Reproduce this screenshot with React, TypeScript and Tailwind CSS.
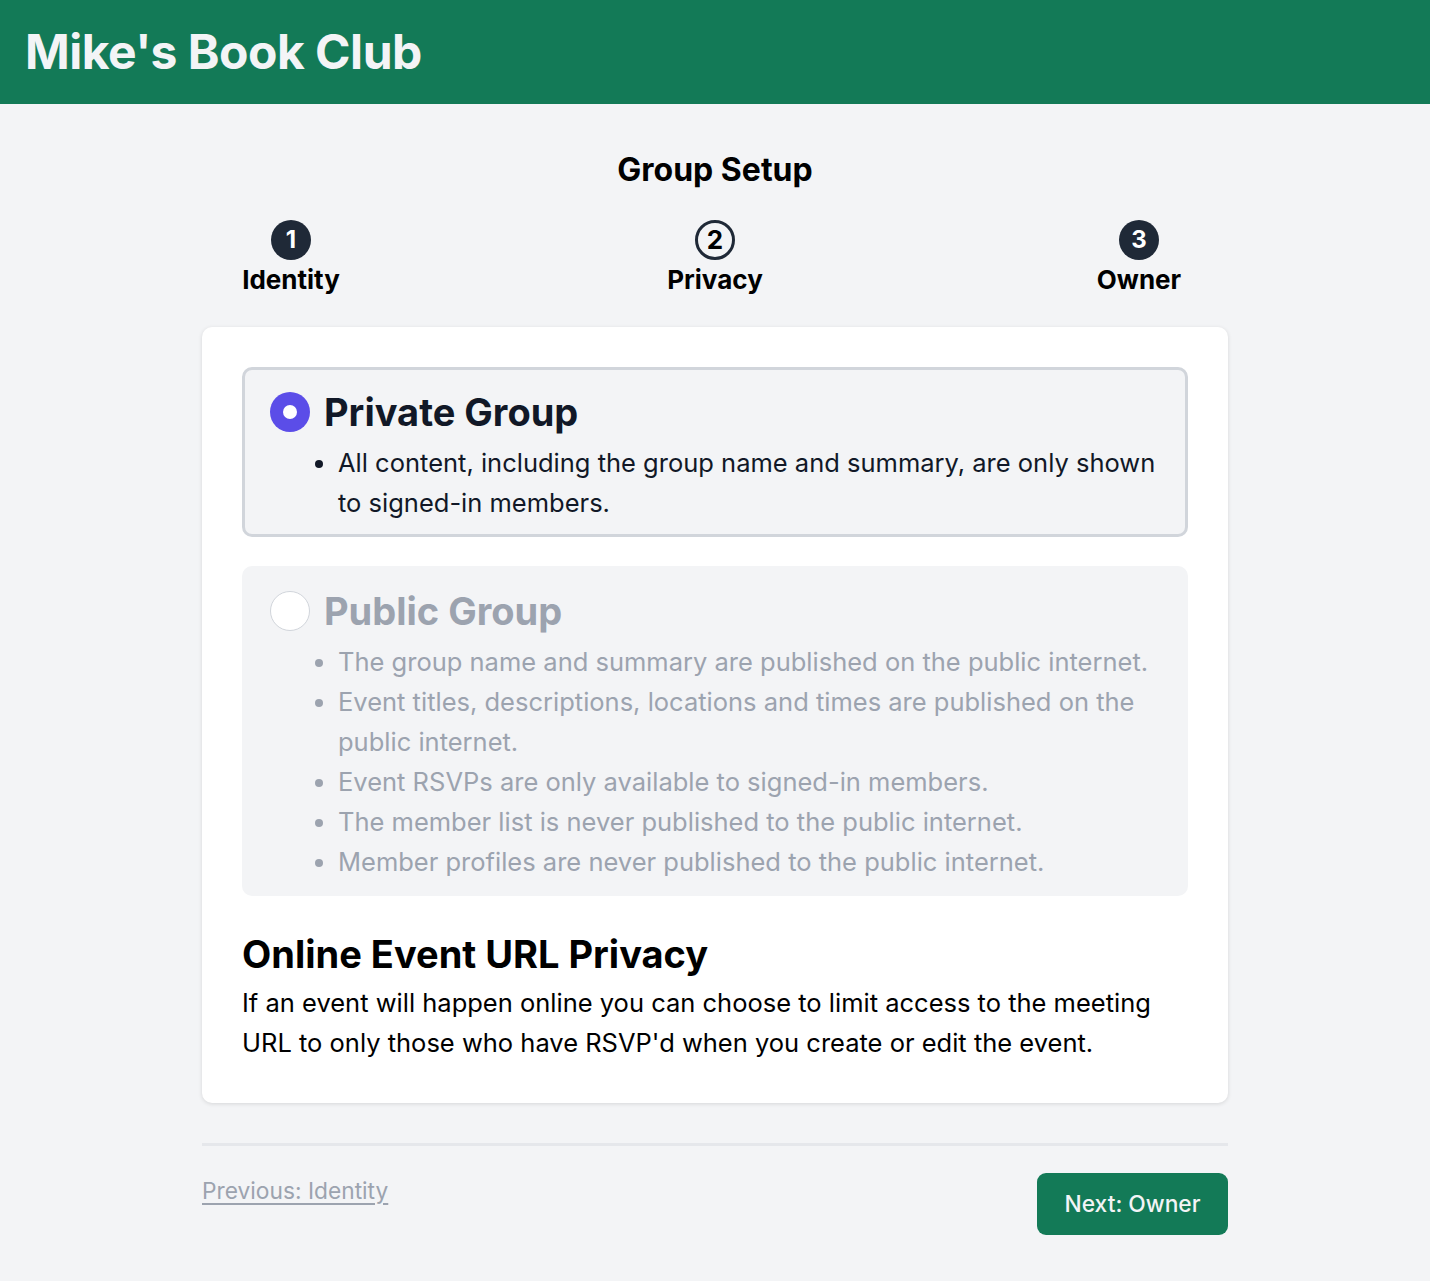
const publicPoints = [
  'The group name and summary are published on the public internet.',
  'Event titles, descriptions, locations and times are published on the public internet.',
  'Event RSVPs are only available to signed-in members.',
  'The member list is never published to the public internet.',
  'Member profiles are never published to the public internet.',
];

const steps = [
  { n: 1, label: 'Identity', current: false },
  { n: 2, label: 'Privacy', current: true },
  { n: 3, label: 'Owner', current: false },
];

function StepBadge({ n, current }: { n: number; current: boolean }) {
  if (current) {
    return (
      <div className="flex h-[40px] w-[40px] items-center justify-center rounded-full border-[3px] border-[#1f2937] text-[26px] font-bold leading-none text-black">
        {n}
      </div>
    );
  }
  return (
    <div className="flex h-[40px] w-[40px] items-center justify-center rounded-full bg-[#1f2937] text-[24px] font-bold leading-none text-white">
      {n}
    </div>
  );
}

export default function App() {
  return (
    <div className="min-h-[1281px] bg-[#f3f4f6] font-['Inter',_'Noto_Sans',_sans-serif]">
      <header className="flex h-[104px] items-center bg-[#137a57] px-[25px]">
        <h1 className="text-[48px] font-bold tracking-[-0.5px] text-[#f3f4f6]">Mike's Book Club</h1>
      </header>

      <main className="pt-[46px]">
        <h2 className="text-center text-[32px] font-bold leading-[40px] text-black">Group Setup</h2>

        <div className="mx-auto mt-[30px] grid w-[1272px] grid-cols-3">
          {steps.map((s) => (
            <div key={s.n} className="flex flex-col items-center">
              <StepBadge n={s.n} current={s.current} />
              <span className="mt-[2px] text-[26px] font-bold leading-[36px] text-black">{s.label}</span>
            </div>
          ))}
        </div>

        <div className="mx-auto mt-[29px] w-[1026px] rounded-[10px] bg-white p-[40px] shadow-[0_1px_4px_rgba(0,0,0,0.12)]">
          <div className="rounded-[10px] border-[3px] border-[#d1d5db] bg-[#f3f4f6] px-[25px] pb-[11px] pt-[18px]">
            <div className="flex items-center gap-[14px]">
              <span className="flex h-[40px] w-[40px] items-center justify-center rounded-full bg-[#5b4de8]">
                <span className="h-[14px] w-[14px] rounded-full bg-white" />
              </span>
              <span className="text-[38px] font-bold leading-[48px] text-[#111827]">Private Group</span>
            </div>
            <ul className="mt-[7px] list-disc pl-[68px] text-[25.5px] leading-[40px] text-[#111827] marker:text-[#111827]">
              <li>All content, including the group name and summary, are only shown to signed-in members.</li>
            </ul>
          </div>

          <div className="mt-[29px] rounded-[10px] border-[3px] border-transparent bg-[#f3f4f6] px-[25px] pb-[11px] pt-[18px]">
            <div className="flex items-center gap-[14px]">
              <span className="h-[40px] w-[40px] rounded-full border-[1.5px] border-[#d1d5db] bg-white" />
              <span className="text-[38px] font-bold leading-[48px] text-[#9ca3af]">Public Group</span>
            </div>
            <ul className="mt-[7px] list-disc pl-[68px] text-[25.5px] leading-[40px] text-[#9ca3af]">
              {publicPoints.map((p) => (
                <li key={p}>{p}</li>
              ))}
            </ul>
          </div>

          <h3 className="mt-[32px] text-[38px] font-bold leading-[52px] text-black">Online Event URL Privacy</h3>
          <p className="mt-[3px] text-[25.5px] leading-[40px] text-black">
            If an event will happen online you can choose to limit access to the meeting URL to only those who have RSVP'd when you create or edit the event.
          </p>
        </div>

        <div className="mx-auto mt-[40px] w-[1026px] border-t-[3px] border-[#e5e7eb] pt-[27px]">
          <div className="flex items-start justify-between">
            <a href="#" className="mt-[2px] text-[22.75px] leading-[32px] text-[#9ca3af] underline underline-offset-[4px]">
              Previous: Identity
            </a>
            <button className="h-[62px] w-[191px] rounded-[9px] bg-[#137a57] text-[22.75px] font-medium text-[#f3f4f6]">
              Next: Owner
            </button>
          </div>
        </div>
      </main>
    </div>
  );
}
